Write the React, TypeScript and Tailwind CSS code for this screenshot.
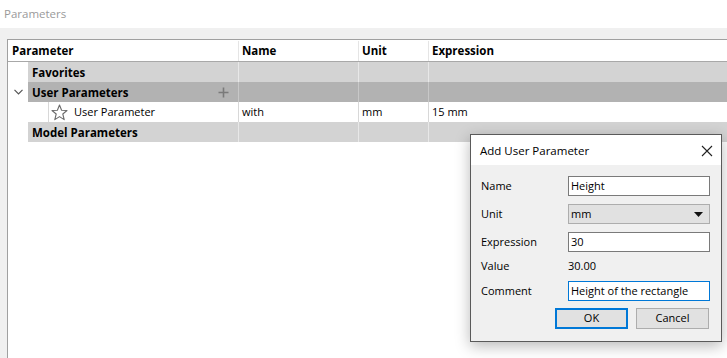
import React from "react";

const font = { fontFamily: '"Open Sans", "Noto Sans", sans-serif' };

function Star() {
  return (
    <svg width="17" height="17" viewBox="0 0 17 17" className="shrink-0">
      <polygon
        points="8.5,1 10.6,6.2 16,6.5 11.8,10 13.2,15.6 8.5,12.6 3.8,15.6 5.2,10 1,6.5 6.4,6.2"
        fill="none"
        stroke="#6b6b6b"
        strokeWidth="1.1"
        strokeLinejoin="round"
      />
    </svg>
  );
}

function Chevron() {
  return (
    <svg width="9" height="6" viewBox="0 0 9 6">
      <polyline points="0.5,0.8 4.5,4.8 8.5,0.8" fill="none" stroke="#555" strokeWidth="1.2" />
    </svg>
  );
}

function Plus() {
  return (
    <svg width="11" height="11" viewBox="0 0 11 11">
      <path d="M5.5 0.5V10.5M0.5 5.5H10.5" stroke="#7a7a7a" strokeWidth="1.6" />
    </svg>
  );
}

function GrayRow({
  label,
  bg,
  sep,
  left,
  plus,
}: {
  label: string;
  bg: string;
  sep: string;
  left?: React.ReactNode;
  plus?: boolean;
}) {
  return (
    <div className="flex h-[20px]">
      <div className="w-[20px] flex items-center justify-center bg-white">{left}</div>
      <div className={`w-[210px] flex items-center pl-[4px] pr-[9px] pt-[1px] font-bold text-[11.5px] text-black ${bg}`}>
        <span className="flex-1">{label}</span>
        {plus && <Plus />}
      </div>
      <div className={`w-[1px] ${sep}`} />
      <div className={`w-[119px] ${bg}`} />
      <div className={`w-[1px] ${sep}`} />
      <div className={`w-[69px] ${bg}`} />
      <div className={`w-[1px] ${sep}`} />
      <div className={`flex-1 ${bg}`} />
    </div>
  );
}

export default function App() {
  return (
    <div className="w-[727px] h-[358px] relative overflow-hidden bg-[#f0f0f0] text-[11px] text-black" style={font}>
      <div className="h-[28px] bg-white flex items-center pl-[4px] text-[#9a9a9a] text-[11.5px]">Parameters</div>
      <div className="ml-[7px] mt-[11px] h-[330px] border-l border-t border-[#a0a0a0] bg-white">
        {/* header */}
        <div className="flex h-[22px] border-b border-[#a8a8a8] font-bold text-[11.5px] pt-[1px]">
          <div className="w-[230px] flex items-center pl-[4px]">Parameter</div>
          <div className="w-[1px] bg-[#e5e5e5]" />
          <div className="w-[119px] flex items-center pl-[3px]">Name</div>
          <div className="w-[1px] bg-[#e5e5e5]" />
          <div className="w-[69px] flex items-center pl-[3px]">Unit</div>
          <div className="w-[1px] bg-[#e5e5e5]" />
          <div className="flex-1 flex items-center pl-[3px]">Expression</div>
        </div>
        <GrayRow label="Favorites" bg="bg-[#d3d3d3]" sep="bg-[#e8e8e8]" />
        <GrayRow label="User Parameters" bg="bg-[#b2b2b2]" sep="bg-[#c8c8c8]" left={<Chevron />} plus />
        <div className="flex h-[20px]">
          <div className="w-[40px] bg-white" />
          <div className="w-[190px] flex items-center border-l border-[#d8d8d8] pl-[2px] gap-[6px]">
            <Star />
            <span className="pt-[1px]">User Parameter</span>
          </div>
          <div className="w-[1px] bg-[#d8d8d8]" />
          <div className="w-[119px] flex items-center pl-[3px] pt-[1px]">with</div>
          <div className="w-[1px] bg-[#d8d8d8]" />
          <div className="w-[69px] flex items-center pl-[3px] pt-[1px]">mm</div>
          <div className="w-[1px] bg-[#d8d8d8]" />
          <div className="flex-1 flex items-center pl-[3px] pt-[1px]">15 mm</div>
        </div>
        <GrayRow label="Model Parameters" bg="bg-[#d3d3d3]" sep="bg-[#e8e8e8]" />
      </div>

      {/* dialog */}
      <div className="absolute left-[470px] top-[134px] w-[252px] h-[208px] border border-[#5a5a5a] bg-[#f0f0f0] shadow-[0_4px_14px_rgba(0,0,0,0.28)] flex flex-col">
        <div className="h-[30px] bg-white flex items-center justify-between pl-[9px] pr-[8px] pt-[1px]">
          <span className="text-[11.5px]">Add User Parameter</span>
          <svg width="12" height="12" viewBox="0 0 12 12">
            <path d="M1 1L11 11M11 1L1 11" stroke="#222" strokeWidth="1.1" />
          </svg>
        </div>
        <div className="flex flex-col pl-[10px] pr-[11px] pt-[11px]">
          <div className="flex items-center h-[20px]">
            <span className="w-[87px] pt-[1px]">Name</span>
            <div className="flex-1 h-[20px] bg-white border border-[#7a7a7a] flex items-center pl-[2px] pt-[1px]">Height</div>
          </div>
          <div className="flex items-center h-[20px] mt-[8px]">
            <span className="w-[87px] pt-[1px]">Unit</span>
            <div className="flex-1 h-[20px] bg-[#e1e1e1] border border-[#adadad] flex items-center pl-[2px] pr-[6px] justify-between">
              <span className="pt-[1px]">mm</span>
              <svg width="9" height="5" viewBox="0 0 9 5">
                <polygon points="0,0 9,0 4.5,5" fill="#111" />
              </svg>
            </div>
          </div>
          <div className="flex items-center h-[20px] mt-[8px]">
            <span className="w-[87px] pt-[1px]">Expression</span>
            <div className="flex-1 h-[20px] bg-white border border-[#7a7a7a] flex items-center pl-[2px] pt-[1px]">30</div>
          </div>
          <div className="flex items-center h-[20px] mt-[4px]">
            <span className="w-[87px]">Value</span>
            <span>30.00</span>
          </div>
          <div className="flex items-center h-[20px] mt-[5px]">
            <span className="w-[87px] pt-[1px]">Comment</span>
            <div className="flex-1 h-[20px] bg-white border border-[#0078d7] flex items-center pl-[2px] pt-[1px]">Height of the rectangle</div>
          </div>
          <div className="flex justify-end gap-[8px] mt-[7px] pr-[1px]">
            <div className="w-[73px] h-[21px] bg-[#e1e1e1] border-2 border-[#0078d7] flex items-center justify-center">OK</div>
            <div className="w-[73px] h-[21px] bg-[#e1e1e1] border border-[#adadad] flex items-center justify-center">Cancel</div>
          </div>
        </div>
      </div>
    </div>
  );
}
